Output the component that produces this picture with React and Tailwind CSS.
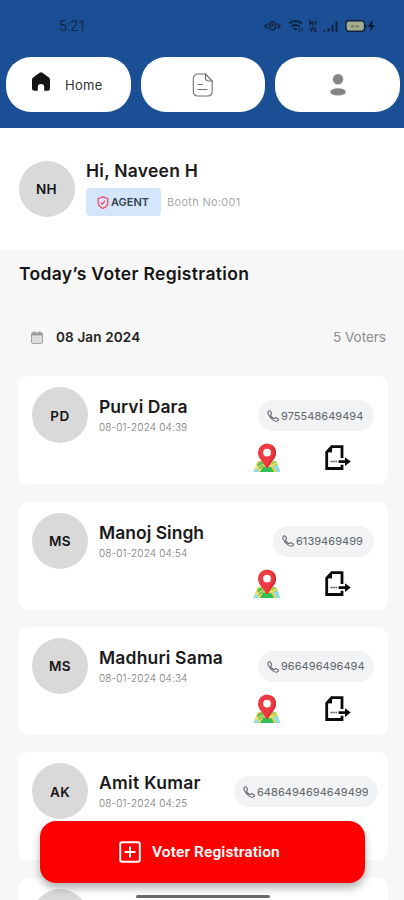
const VOTERS = [
  { initials: "PD", name: "Purvi Dara", time: "08-01-2024 04:39", phone: "975548649494", nameClass: "tracking-[0.05px]", pill: "w-[116px] mr-[14px]", actions: "mt-[12px]" },
  { initials: "MS", name: "Manoj Singh", time: "08-01-2024 04:54", phone: "6139469499", nameClass: "tracking-[0.02px]", pill: "w-[101px] mr-[14px]", actions: "mt-[12px]" },
  { initials: "MS", name: "Madhuri Sama", time: "08-01-2024 04:34", phone: "966496496494", nameClass: "tracking-[0.18px]", pill: "w-[116px] mr-[14px]", actions: "mt-[12px]" },
  { initials: "AK", name: "Amit Kumar", time: "08-01-2024 04:25", phone: "6486494694649499", nameClass: "tracking-[0.3px]", pill: "w-[144px] mr-[10px]", actions: "mt-[15px]" },
];

function StatusIcons() {
  return (
    <svg width="116" height="16" viewBox="0 0 116 16" fill="none" stroke="#10223f">
      {/* vibrate / eye */}
      <path d="M4.500 5.500 2 8l2.500 2.500M14.500 5.500 17 8l-2.500 2.500" strokeWidth="1.600" />
      <ellipse cx="9.500" cy="8" rx="3.200" ry="4" strokeWidth="1.500" />
      <path d="M8 8.500 9.500 6.500 11 8.500" strokeWidth="1.300" />
      {/* wifi */}
      <path d="M26 5.500c4-3 9-3 13 0M28.500 8.500c2.500-2 5.500-2 8 0M31 11.500c1-.8 2-.8 3 0" strokeWidth="1.900" />
      <path d="M36.500 10v4M39 9.500v4" strokeWidth="1" />
      {/* volte */}
      <path d="M47 7V3l3 4V3M52 3l1.500 2M47 9.500l1.500 3.500 1.500-3.500M52 9v4h2M53 4v3" strokeWidth="1.400" />
      {/* signal */}
      <path d="M61.500 12v1.500M65.500 10v3.500M69.500 7v6.500M73.500 3v10.500" strokeWidth="2" />
      {/* battery */}
      <rect x="83" y="2.800" width="18.500" height="10.400" rx="3" fill="#a3ad91" strokeWidth="1.400" />
      <path d="M102.800 6.500v3.500" strokeWidth="1.200" />
      <path d="M88 8.300h3.500M92.500 8.300h3.500" stroke="#7b846b" strokeWidth="2.500" />
      <path d="M109 2.500 105 8.700h2.900l-.8 5 4.600-6.500h-3.100l1.400-4.700z" fill="#07152c" stroke="none" />
    </svg>
  );
}

function HomeIcon() {
  return (
    <svg width="18" height="19" viewBox="0 0 18 19" fill="#141414">
      <path d="M7.600.7a2.300 2.300 0 0 1 2.800 0l6.200 4.600c.9.700 1.400 1.500 1.400 2.600v8.300a2.500 2.500 0 0 1-2.500 2.500h-3.300v-3.500a3.200 3.200 0 0 0-6.400 0v3.500H2.500A2.500 2.500 0 0 1 0 16.200V7.900c0-1.100.5-1.900 1.400-2.600z" />
    </svg>
  );
}

function DocIcon() {
  return (
    <svg width="22" height="24" viewBox="0 0 22 24" fill="none" stroke="#6f6f6f" strokeWidth="1.100">
      <path d="M13.500 1H6C3 1 1.300 2.700 1.300 6v12c0 3.300 1.700 5 4.700 5h9.500c3 0 4.700-1.700 4.700-5V8z" strokeLinejoin="round" />
      <path d="M13.500 1.300v3.500c0 2.200 1 3.200 3.200 3.200h3.300M6 11.500h4.500M6 16.500h9" strokeLinecap="round" />
    </svg>
  );
}

function UserIcon() {
  return (
    <svg width="16" height="22" viewBox="0 0 16 22" fill="#858585">
      <circle cx="8" cy="5.300" r="5.200" />
      <ellipse cx="8" cy="17.900" rx="7.800" ry="3.600" />
    </svg>
  );
}

function ShieldIcon() {
  return (
    <svg width="12" height="13" viewBox="0 0 12 13" fill="none" stroke="#ea4a63" strokeWidth="1.300">
      <path d="M6 .8 10.800 2.500v4c0 2.800-2 4.800-4.800 5.800-2.800-1-4.800-3-4.800-5.800v-4z" strokeLinejoin="round" />
      <path d="m3.900 6.700 1.500 1.300 2.700-3.300" />
    </svg>
  );
}

function CalendarIcon() {
  return (
    <svg width="12" height="13" viewBox="0 0 12 13" fill="none" stroke="#999">
      <rect x=".6" y="1.800" width="10.800" height="10.500" rx="1" fill="#e3e3e3" />
      <path d="M.6 3.300h10.800" strokeWidth="2.200" />
      <path d="M3.300.3v2M8.700.3v2" strokeWidth="1.200" />
      <path d="M2.500 7h7M2.500 9.500h7" stroke="#c8c8c8" strokeDasharray="1.400 1" />
    </svg>
  );
}

function PhoneIcon() {
  return (
    <svg className="shrink-0" width="12" height="12" viewBox="0 0 12 12" fill="none" stroke="#62666b" strokeWidth="1.100" strokeLinejoin="round">
      <path d="M1.200 1.500C1.900.5 2.900.6 3.500 1.500l.9 1.400c.4.700.1 1.200-.5 1.700-.5.400-.3.800.2 1.500.7.900 1.400 1.600 2.300 2.200.6.400.9.400 1.400-.1.500-.6 1-.7 1.700-.3l1.300.8c.8.500.9 1.200.1 1.900-1.100 1-2.700.7-4.800-.7C4.300 8.600 2.500 6.700 1.400 4.500.9 3.400.7 2.300 1.200 1.500z" />
    </svg>
  );
}

function MapPinIcon() {
  return (
    <svg width="28" height="30" viewBox="0 0 28 30">
      <path d="M5 18h18l4.500 11H.5z" fill="#e8d44e" />
      <path d="M5 18h5l3.500 4.500L10 29H.5l2-5z" fill="#f3d65a" />
      <path d="M4 21l4-3 4 4-6 4z" fill="#5fc04d" />
      <path d="M10 24l4-2 5 3 2 4H7z" fill="#2fbf57" />
      <path d="M.5 29 2.300 24.500 6 27l-1 2zM20 23l4.800-.8L27.500 29H24z" fill="#8edbf2" />
      <path d="M18 18h5l1.500 3.700L19 23z" fill="#a6cf55" />
      <path d="m1.500 26.500 8-5 5 3 10-5" stroke="#fbeb8b" strokeWidth="1" fill="none" />
      <path d="M14 .5a9 9 0 0 1 9 9.200c0 5.500-4.600 8.300-8.300 15.300h-1.400C9.600 18 5 15.200 5 9.700A9 9 0 0 1 14 .5z" fill="#ef3a40" />
      <path d="M18 1.500a9 9 0 0 1 5 8.200c0 5.500-4.600 8.300-8.300 15.300H14c1-7 6.500-10 6.500-16 0-3-1-5.500-2.500-7.500z" fill="#d92f37" />
      <circle cx="14" cy="9.600" r="3.900" fill="#fff" />
    </svg>
  );
}

function ExportIcon() {
  return (
    <svg width="26" height="26" viewBox="0 0 26 26" fill="none" stroke="#0b0b0b">
      <path d="M17 13V1.700H6.800L1.700 7.300v16.200H17v-3.700" strokeWidth="2.800" />
      <path d="M.5 7 7 0v7.500z" fill="#0b0b0b" stroke="none" />
      <path d="M13.500 16.600H22" strokeWidth="2.700" />
      <path d="M20 12.300 25.800 16.600 20 21z" fill="#0b0b0b" stroke="none" />
      <path d="M5.500 16.500h2M8.200 16.500h1.600M10.500 16.500h1.500" stroke="#555" strokeWidth="1.500" />
    </svg>
  );
}

function Avatar({ children }) {
  return (
    <div className="flex h-14 w-14 shrink-0 items-center justify-center rounded-full bg-[#d9d9d9] pt-px text-[13.5px] font-semibold tracking-[0.4px] text-[#151515]">
      {children}
    </div>
  );
}

function VoterCard({ voter }) {
  return (
    <div className="flex h-[108px] shrink-0 rounded-[10px] bg-white pt-[11px] pl-[14px]">
      <Avatar>{voter.initials}</Avatar>
      <div className="ml-[11px] pt-[9px] whitespace-nowrap">
        <div className={`text-[17.5px] leading-[22px] font-semibold text-[#1a1a1a] ${voter.nameClass}`}>{voter.name}</div>
        <div className="mt-[2px] text-[10px] leading-[14px] font-light tracking-[0.15px] text-[#777]">{voter.time}</div>
      </div>
      <div className="ml-auto flex w-[120px] flex-col items-end pt-[13px]">
        <div className={`flex h-[31px] shrink-0 items-center gap-[2px] rounded-full bg-[#f1f3f5] pl-[9px] text-[11px] tracking-[0.05px] whitespace-nowrap text-[#606468] ${voter.pill}`}>
          <PhoneIcon />
          <span>{voter.phone}</span>
        </div>
        <div className={`mr-[37px] flex gap-[44px] ${voter.actions}`}>
          <MapPinIcon />
          <div className="pt-[2px]">
            <ExportIcon />
          </div>
        </div>
      </div>
    </div>
  );
}

export default function App() {
  return (
    <div className="relative flex h-[900px] w-[404px] flex-col overflow-hidden bg-[#f7f7f7] font-['Inter',sans-serif]">
      <header className="h-[128px] shrink-0 bg-[#1a4f95]">
        <div className="flex h-[57px] items-center justify-between pr-[25px] pb-[5px] pl-[59px]">
          <span className="font-['Roboto',sans-serif] text-[14px] text-[#10264a]">5:21</span>
          <StatusIcons />
        </div>
        <nav className="flex gap-[10px] pl-[6px]">
          <button className="flex h-[55px] w-[125px] items-center rounded-[25px] bg-white pl-[26px]">
            <span className="mb-[6px]">
              <HomeIcon />
            </span>
            <span className="mt-[3px] ml-[15px] text-[13px] tracking-[0.3px] text-[#333]">Home</span>
          </button>
          <button className="flex h-[55px] w-[124px] items-center justify-center rounded-[25px] bg-white">
            <DocIcon />
          </button>
          <button className="flex h-[55px] w-[125px] items-center justify-center rounded-[25px] bg-white">
            <UserIcon />
          </button>
        </nav>
      </header>

      <section className="flex h-[122px] shrink-0 bg-white pt-[33px] pl-[18.500px]">
        <Avatar>NH</Avatar>
        <div className="ml-[11.500px]">
          <h1 className="text-[17.5px] leading-[20px] font-semibold tracking-[0.25px] text-[#1a1a1a]">Hi, Naveen H</h1>
          <div className="mt-[7px] flex items-center">
            <div className="flex h-[28px] w-[75px] items-center gap-[2px] rounded-[4px] bg-[#d5e6fc] pl-[11px] text-[11px] font-semibold text-[#343f4d]">
              <ShieldIcon />
              AGENT
            </div>
            <span className="ml-[6px] text-[11px] tracking-[0.3px] text-[#a9a9a9]">Booth No:001</span>
          </div>
        </div>
      </section>

      <h2 className="mt-[12px] pl-[19px] text-[17.5px] leading-[24px] font-semibold tracking-[0.33px] text-[#151515]">Today’s Voter Registration</h2>

      <div className="mt-[41px] flex h-[22px] items-center pr-[18px] pl-[31px]">
        <CalendarIcon />
        <span className="ml-[13px] text-[13.5px] font-semibold tracking-[0.15px] text-[#222]">08 Jan 2024</span>
        <span className="ml-auto text-[13.5px] text-[#8c8c8c]">5 Voters</span>
      </div>

      <div className="mt-[29px] flex flex-col gap-[17.4px] pr-[16px] pl-[18px]">
        {VOTERS.map((voter, i) => (
          <VoterCard key={i} voter={voter} />
        ))}
        {/* next card, still scrolled under the button */}
        <div className="h-[24px] shrink-0 overflow-hidden rounded-t-[10px] bg-white pt-[11px] pl-[14px]">
          <Avatar />
        </div>
      </div>

      {/* Floating action + gesture bar */}
      <button className="absolute top-[821px] left-[40px] flex h-[62px] w-[325px] items-center rounded-[16px] bg-[#fe0000] pl-[79px] shadow-[0_5px_9px_rgba(0,0,0,0.3)]">
        <svg width="22" height="22" viewBox="0 0 22 22" fill="none" stroke="#fff" strokeWidth="2">
          <rect x="1.200" y="1.200" width="19.600" height="19.600" rx="2" />
          <path d="M11 5.500v11M5.500 11h11" />
        </svg>
        <span className="mt-[2px] ml-[11px] font-['Roboto',sans-serif] text-[15.5px] font-semibold tracking-[0.1px] text-white">Voter Registration</span>
      </button>
      <div className="absolute top-[895px] left-[136px] h-[3px] w-[134px] rounded-full bg-[#696969]" />
    </div>
  );
}
